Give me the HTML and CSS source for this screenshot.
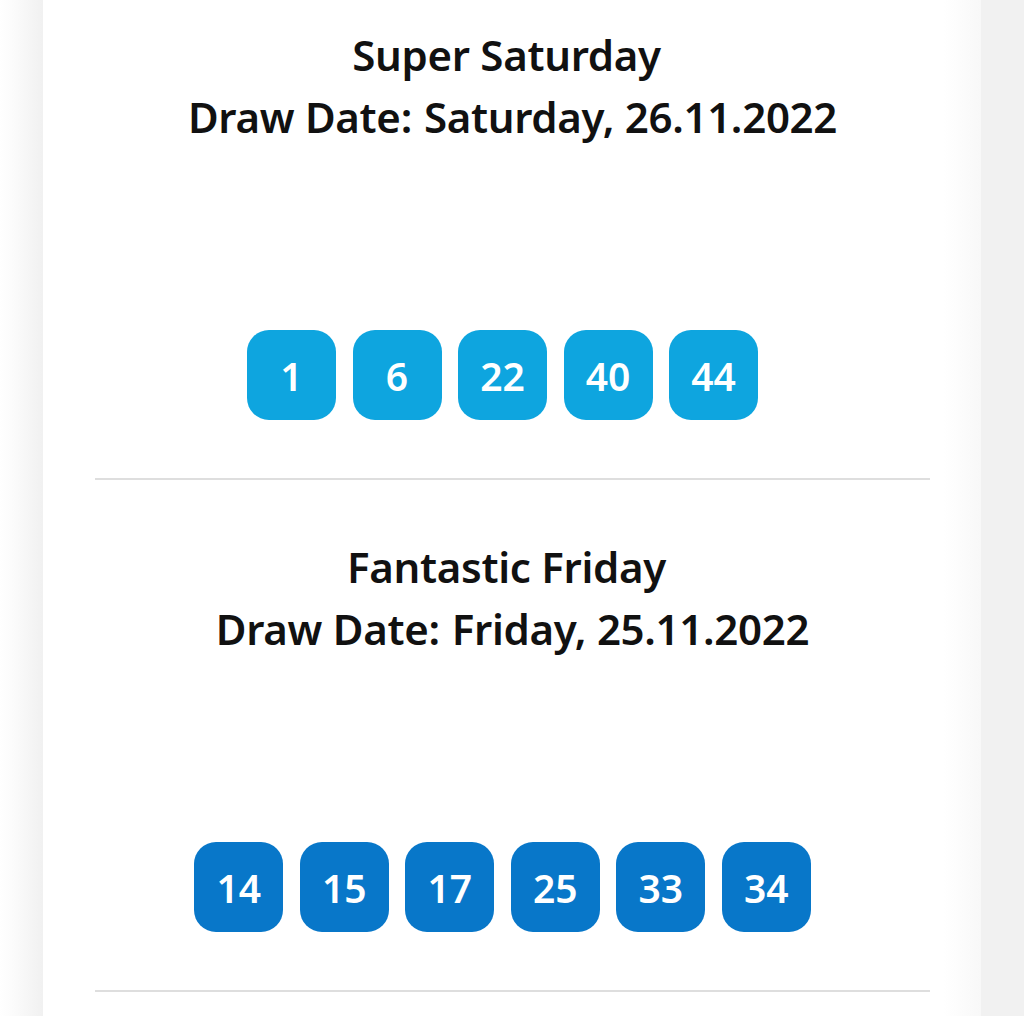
FILE: index.html
```html
<!DOCTYPE html>
<html lang="en">
<head>
<meta charset="utf-8">
<title>Draw Results</title>
<link rel="stylesheet" href="styles.css">
</head>
<body>
<div class="page">
  <div class="side side-left"></div>
  <main class="card">
    <section class="draw draw-first">
      <div class="heading">
        <div class="title">Super Saturday</div>
        <div class="date">Draw Date:<span class="date-value">Saturday, 26.11.2022</span></div>
      </div>
      <div class="balls">
        <div class="ball ball-light">1</div>
        <div class="ball ball-light">6</div>
        <div class="ball ball-light">22</div>
        <div class="ball ball-light">40</div>
        <div class="ball ball-light">44</div>
      </div>
    </section>
    <section class="draw">
      <div class="heading">
        <div class="title">Fantastic Friday</div>
        <div class="date">Draw Date:<span class="date-value">Friday, 25.11.2022</span></div>
      </div>
      <div class="balls">
        <div class="ball ball-dark">14</div>
        <div class="ball ball-dark">15</div>
        <div class="ball ball-dark">17</div>
        <div class="ball ball-dark">25</div>
        <div class="ball ball-dark">33</div>
        <div class="ball ball-dark">34</div>
      </div>
    </section>
  </main>
  <div class="side side-right"></div>
</div>
</body>
</html>
```

FILE: styles.css
```css
html, body {
  margin: 0;
  padding: 0;
  height: 100%;
  overflow: hidden;
}
body {
  font-family: "Noto Sans", "Open Sans", sans-serif;
  color: #111;
  background: #fff;
}
.page {
  display: flex;
  min-height: 1016px;
}
.side {
  flex: none;
}
.side-left {
  width: 43px;
  background: linear-gradient(to right, #ffffff 0px, #fbfbfb 14px, #f1f1f1 42px);
}
.side-right {
  width: 43px;
  background: #f1f1f1;
}
.card {
  flex: 1;
  background: linear-gradient(to right, #ffffff 0, #ffffff 96%, #f8f8f8 100%);
  padding: 0 51px 0 52px;
}
.draw {
  padding: 56px 0 58px;
  border-bottom: 2px solid #dedede;
  display: flex;
  flex-direction: column;
  align-items: center;
}
.draw-first {
  padding-top: 24px;
}
.heading {
  text-align: center;
  font-size: 42px;
  font-weight: 600;
  line-height: 62px;
  letter-spacing: -0.3px;
}
.title {
  padding-right: 12px;
}
.date-value {
  margin-left: 12px;
}
.balls {
  margin-top: 182px;
  display: flex;
  justify-content: center;
  gap: 16.5px;
  padding-right: 20px;
}
.ball {
  width: 89px;
  height: 90px;
  border-radius: 22px;
  display: flex;
  align-items: center;
  justify-content: center;
  color: #fff;
  font-size: 39px;
  font-weight: 600;
}
.ball-light {
  background: #0ea5df;
}
.ball-dark {
  background: #0877c9;
}
```
